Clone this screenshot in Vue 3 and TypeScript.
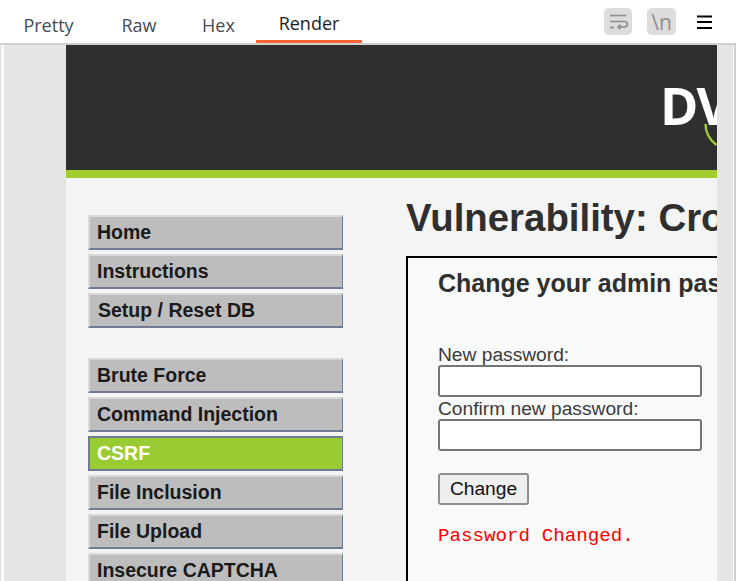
<template>
  <div class="shell">
    <div class="toolbar">
      <nav class="tabs">
        <span v-for="tab in tabs" :key="tab.label" class="tab" :class="{ active: tab.active }" :style="{ width: tab.width + 'px' }">{{ tab.label }}</span>
      </nav>
      <div class="tools">
        <span class="tool">
          <svg width="28" height="27" viewBox="0 0 28 27" fill="none" stroke="#8e8e8e" stroke-width="1.6">
            <path d="M6 7.5h16" />
            <path d="M6 13.5h14.5a2.6 2.6 0 0 1 0 5.4H14" />
            <path d="M16.5 16.6 14 18.9l2.5 2.3" />
            <path d="M6 19.5h4" />
          </svg>
        </span>
        <span class="tool newline">\n</span>
        <svg class="menu" width="16" height="14" viewBox="0 0 16 14" fill="none" stroke="#000" stroke-width="2">
          <path d="M0 1.5h15M0 7h15M0 13h15" />
        </svg>
      </div>
    </div>
    <div class="frame">
      <div class="gutter"></div>
      <div class="page">
        <header class="banner">
          <div class="logo">
            <span class="logo-text">DVWA</span>
            <svg class="swoosh" width="20" height="30" viewBox="0 0 20 30" fill="none" stroke="#a3cd2f" stroke-width="2.4">
              <path d="M1.5 1c0 8 3 15 11 21" />
            </svg>
          </div>
        </header>
        <div class="content">
          <aside class="side">
            <ul v-for="(group, i) in menu" :key="i" class="group">
              <li v-for="item in group" :key="item" class="item" :class="{ selected: item === 'CSRF', shifted: item === 'Setup / Reset DB' }">{{ item }}</li>
            </ul>
          </aside>
          <main class="body">
            <h1>Vulnerability: Cross Site Request Forgery (CSRF)</h1>
            <section class="box">
              <h3>Change your admin password:</h3>
              <form class="form" @submit.prevent>
                <label for="new-pass">New password:</label>
                <input id="new-pass" type="password" />
                <label for="confirm-pass">Confirm new password:</label>
                <input id="confirm-pass" type="password" />
                <button type="button">Change</button>
              </form>
              <pre class="result">Password Changed.</pre>
            </section>
          </main>
        </div>
      </div>
      <div class="scrollbar"></div>
    </div>
  </div>
</template>

<script setup lang="ts">
const tabs = [
  { label: 'Pretty', width: 97 },
  { label: 'Raw', width: 84 },
  { label: 'Hex', width: 75 },
  { label: 'Render', width: 106, active: true }
];

const menu: string[][] = [
  ['Home', 'Instructions', 'Setup / Reset DB'],
  ['Brute Force', 'Command Injection', 'CSRF', 'File Inclusion', 'File Upload', 'Insecure CAPTCHA']
];
</script>

<style>
html,
body {
  margin: 0;
  background: #fff;
  overflow: hidden;
}
</style>

<style scoped>
.shell {
  width: 736px;
  height: 581px;
  display: flex;
  flex-direction: column;
  overflow: hidden;
  background: #fff;
}

.toolbar {
  height: 43px;
  flex: none;
  display: flex;
  justify-content: space-between;
  border-bottom: 2px solid #cfcfcf;
}

.tabs {
  display: flex;
}

.tab {
  height: 43px;
  box-sizing: border-box;
  display: flex;
  align-items: center;
  justify-content: center;
  padding-top: 6px;
  font: 18px "Open Sans", "Noto Sans", sans-serif;
  color: #444b57;
}

.tab.active {
  color: #1c1c1c;
  border-bottom: 3px solid #ff6633;
}

.tools {
  display: flex;
  align-items: flex-start;
  padding: 8px 23px 0 0;
}

.tool {
  width: 28px;
  height: 27px;
  border-radius: 5px;
  background: #dcdcdc;
  display: flex;
  align-items: center;
  justify-content: center;
  margin-right: 15px;
}

.newline {
  width: 29px;
  font: 21px "Open Sans", sans-serif;
  color: #8e8e8e;
  margin-right: 21px;
}

.menu {
  margin-top: 7px;
}

.frame {
  flex: 1;
  min-height: 0;
  display: flex;
  border-right: 2px solid #cfcfcf;
  border-left: 1px solid #dcdcdc;
  padding-left: 3px;
}

.gutter {
  width: 62px;
  flex: none;
  background: #e5e5e5;
}

.page {
  width: 651px;
  flex: none;
  overflow: hidden;
  background: #f4f4f4;
}

.scrollbar {
  width: 16px;
  flex: none;
  background: #e5e5e5;
}

.banner {
  height: 133px;
  box-sizing: border-box;
  background: #2f2f2f;
  border-bottom: 8px solid #a3cd2f;
  padding-left: 594px;
  padding-top: 40px;
}

.logo {
  position: relative;
  width: 200px;
}

.logo-text {
  font: bold 52px/40px "Open Sans", "Noto Sans", sans-serif;
  color: #fff;
  letter-spacing: -2px;
}

.swoosh {
  position: absolute;
  left: 44px;
  top: 38px;
}

.content {
  display: flex;
  padding-left: 22px;
}

.side {
  width: 255px;
  flex: none;
  padding-top: 37px;
}

.group {
  list-style: none;
  margin: 0 0 30px;
  padding: 0;
  display: flex;
  flex-direction: column;
  gap: 4px;
}

.item {
  height: 35px;
  box-sizing: border-box;
  padding: 0 0 0 7px;
  background: #bdbdbd;
  border: 1px solid #6f7b91;
  border-top: 2px solid #d9d9d9;
  border-left: 2px solid #d9d9d9;
  border-bottom-width: 2px;
  font: bold 19.5px/30px "Liberation Sans", Arial, sans-serif;
  color: #1a1a1a;
}

.item.shifted {
  padding-left: 8px;
}

.item.selected {
  background: #99cc33;
  color: #fff;
  border-color: #6f7b91;
  border-left-width: 2px;
}

.body {
  margin-left: 63px;
  width: 700px;
  flex: none;
}

h1 {
  margin: 0 0 19px;
  padding-top: 21px;
  font: bold 38.4px/38px "Liberation Sans", Arial, sans-serif;
  color: #2f2f2f;
  white-space: nowrap;
}

.box {
  height: 400px;
  box-sizing: border-box;
  background: #f8f9f9;
  border: 2px solid #000;
  padding-left: 30px;
}

h3 {
  margin: 0;
  padding-top: 11px;
  font: bold 25px/28px "Liberation Sans", Arial, sans-serif;
  color: #2f2f2f;
  white-space: nowrap;
}

.form {
  display: flex;
  flex-direction: column;
  align-items: flex-start;
  padding-top: 47px;
}

label {
  font: 19.2px/21px "Liberation Sans", Arial, sans-serif;
  color: #3b3b3b;
}

input {
  width: 264px;
  height: 32px;
  box-sizing: border-box;
  margin: 0 0 1px;
  background: #fff;
  border: 2px solid #767676;
  border-radius: 3px;
}

button {
  margin-top: 21px;
  width: 91px;
  height: 32px;
  padding: 0;
  background: #efefef;
  border: 2px solid #8f8f8f;
  border-radius: 3px;
  font: 19.2px "Liberation Sans", Arial, sans-serif;
  color: #111;
}

.result {
  margin: 20px 0 0;
  font: 19.2px/22px "Liberation Mono", "Courier New", monospace;
  color: #ff0000;
}
</style>
